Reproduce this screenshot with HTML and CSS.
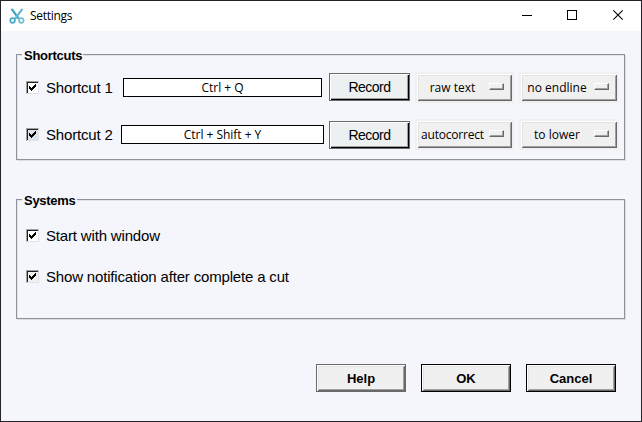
FILE: index.html
```html
<!DOCTYPE html>
<html lang="en">
<head>
<meta charset="utf-8">
<title>Settings</title>
<link rel="stylesheet" href="styles.css">
</head>
<body>
<svg width="0" height="0" class="defs"><symbol id="tick" viewBox="0 0 7 7"><path d="M0 2h1v1h1v1h1v-1h1v-1h1v-1h1v-1h1v3h-1v1h-1v1h-1v1h-1v1h-1v-1h-1v-1h-1z"/></symbol></svg>
<div class="window">
  <header class="titlebar">
    <svg class="logo" width="16" height="16" viewBox="0 0 16 16" fill="none">
      <path d="M2.6 0.800L9.9 10.800" stroke="#38a3c7" stroke-width="2.200"/>
      <path d="M13.4 0.800L6.1 10.800" stroke="#65bad2" stroke-width="2.200"/>
      <circle cx="3.6" cy="12.5" r="2.3" stroke="#45a9c9" stroke-width="1.7"/>
      <circle cx="12.3" cy="12.5" r="2.3" stroke="#76bed2" stroke-width="1.7"/>
    </svg>
    <span class="title">Settings</span>
    <div class="controls">
      <svg width="46" height="30" viewBox="-1 0 46 30" shape-rendering="crispEdges"><path d="M18 14.5h10" stroke="#000"/></svg>
      <svg width="46" height="30" viewBox="-1 0 46 30" shape-rendering="crispEdges"><path d="M17.5 9.5h9v9h-9z" stroke="#000" fill="none"/></svg>
      <svg width="46" height="30" viewBox="-1 0 46 30"><path d="M17.3 9.3l9.4 9.4M26.7 9.3l-9.4 9.4" stroke="#000" stroke-width="1.1"/></svg>
    </div>
  </header>
  <main class="content">
    <section class="group shortcuts">
      <h2 class="legend"><span>Shortcuts</span></h2>
      <div class="row">
        <span class="check"><svg width="7" height="7"><use href="#tick"/></svg></span>
        <span class="label">Shortcut 1</span>
        <div class="slot"><div class="field short"><span>Ctrl + Q</span></div></div>
        <button class="record">Record</button>
        <div class="option first"><span class="value raw">raw text</span><i class="knob"></i></div>
        <div class="option second"><span class="value">no endline</span><i class="knob"></i></div>
      </div>
      <div class="row">
        <span class="check shaded"><svg width="7" height="7"><use href="#tick"/></svg></span>
        <span class="label">Shortcut 2</span>
        <div class="slot"><div class="field"><span>Ctrl + Shift + Y</span></div></div>
        <button class="record lower">Record</button>
        <div class="option first"><span class="value auto">autocorrect</span><i class="knob"></i></div>
        <div class="option second"><span class="value">to lower</span><i class="knob"></i></div>
      </div>
    </section>
    <section class="group systems">
      <h2 class="legend"><span>Systems</span></h2>
      <div class="row">
        <span class="check"><svg width="7" height="7"><use href="#tick"/></svg></span>
        <span class="label">Start with window</span>
      </div>
      <div class="row">
        <span class="check plain"><svg width="7" height="7"><use href="#tick"/></svg></span>
        <span class="label">Show notification after complete a cut</span>
      </div>
    </section>
    <footer class="actions">
      <button class="action help">Help</button>
      <button class="action">OK</button>
      <button class="action">Cancel</button>
    </footer>
  </main>
</div>
</body>
</html>
```
FILE: styles.css
```css
* { box-sizing: border-box; }
body { margin: 0; font-family: "Liberation Sans", Arial, sans-serif; color: #000; }
.defs { display: none; }
.window { width: 642px; height: 422px; border: 1px solid #252329; background: #f4f6fb; }
.titlebar { height: 30px; display: flex; align-items: center; background: #fff; padding-left: 8px; }
.title { margin-left: 5px; font: 12px/16px "Open Sans", sans-serif; letter-spacing: -0.3px; }
.controls { display: flex; margin-left: auto; }
.controls svg { display: block; }
.content { padding: 23px 15px 0; }
.group { width: 609px; border: 1px solid #919297; box-shadow: inset 1px 1px 0 #e2e3e8, 1px 1px 0 #dcdee3; padding-left: 9px; }
.shortcuts { height: 106px; }
.systems { height: 120px; margin-top: 39px; }
.legend { display: flex; height: 15px; margin: -7px 0 0 -4px; font-size: 13px; line-height: 15px; }
.legend span { background: #f4f6fb; padding: 0 1px 0 2px; letter-spacing: -0.28px; }
.row { display: flex; align-items: center; height: 31px; white-space: nowrap; }
.shortcuts .row { margin-top: 9px; }
.shortcuts .row + .row { margin-top: 16px; }
.systems .row { margin-top: 12px; }
.systems .row + .row { margin-top: 10px; }
.check { width: 13px; height: 13px; flex: none; border: 1px solid; border-color: #a0a0a0 #e0e2e6 #e0e2e6 #a0a0a0; box-shadow: inset 1px 1px 0 #222; background: #fff; padding: 2px; }
.check svg { display: block; shape-rendering: crispEdges; }
.shaded { background: #dbe2e8; }
.plain { background: #f0f0f0; }
.label { margin-left: 7px; font-size: 15px; line-height: 18px; letter-spacing: -0.17px; }
.shortcuts .label { width: 75px; }
.slot { width: 203px; display: flex; justify-content: center; }
.field { width: 203px; height: 19px; border: 1px solid #000; background: #fff; text-align: center; font: 12px/17px "Open Sans", sans-serif; }
.field span { letter-spacing: -0.03px; }
.short { width: 199px; }
button { margin: 0; padding: 0; color: #000; font-family: inherit; }
.record { width: 81px; height: 28px; margin: 0 5px 1px; border: 1px solid #696969; background: #ecf0f1; box-shadow: inset 1px 1px 0 #fff, inset -1px -1px 0 #000, inset -2px -2px 0 #a0a0a0; font-size: 14px; letter-spacing: -0.5px; }
.record.lower { margin: 1px 5px 0; }
.option { width: 99px; height: 31px; border: 2px solid #f0f0f0; background: #f0f0f0; box-shadow: inset 1px 1px 0 #fff, inset -1px -1px 0 #696969, inset 2px 2px 0 #e3e3e3, inset -2px -2px 0 #a0a0a0; display: flex; align-items: center; }
.second { width: 100px; margin-left: 5px; }
.value { flex: 1; text-align: center; font: 12px/17px "Open Sans", sans-serif; padding-right: 1px; }
.knob { width: 15px; height: 7px; flex: none; margin: -3px 8px 0 0; border: 1px solid; border-color: #fff #696969 #696969 #fff; box-shadow: inset -1px -1px 0 #a0a0a0; background: #f0f0f0; }
.auto { letter-spacing: -0.2px; }
.actions { display: flex; justify-content: flex-end; gap: 15px; margin-top: 45px; padding-right: 10px; }
.action { width: 90px; height: 28px; border: 1px solid #000; background: #f0f0f0; box-shadow: inset 1px 1px 0 #fff, inset -1px -1px 0 #696969, inset 2px 2px 0 #e3e3e3, inset -2px -2px 0 #a0a0a0; font-size: 13px; font-weight: bold; }
.help { border-color: #696969; }
```
